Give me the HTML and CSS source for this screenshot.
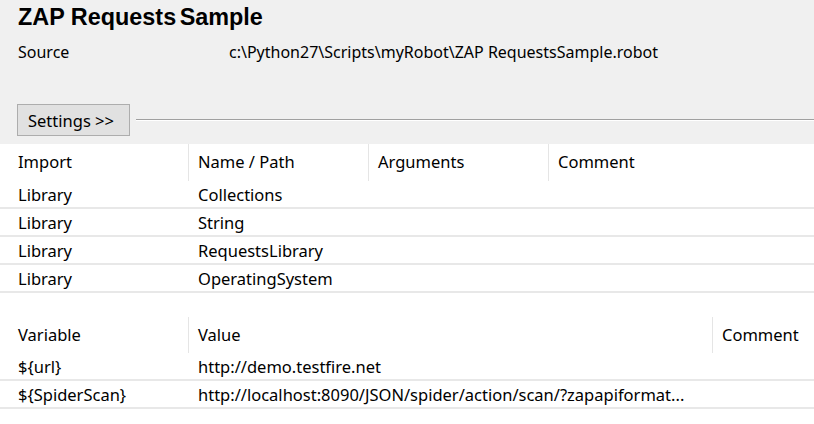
FILE: index.html
```html
<!DOCTYPE html>
<html>
<head>
<meta charset="utf-8">
<link rel="stylesheet" href="styles.css">
</head>
<body>
<div class="top">
  <h1 class="title">ZAP Requests<span class="tight"> Sample</span></h1>
  <div class="source">
    <span class="src-label">Source</span>
    <span class="src-path">c:\Python27\Scripts\myRobot\ZAP RequestsSample.robot</span>
  </div>
  <div class="settings">
    <button class="btn">Settings &gt;&gt;</button>
    <div class="etch"></div>
  </div>
</div>
<div class="tables">
  <div class="grid imports">
    <div class="row head">
      <div class="cell c1">Import</div>
      <div class="cell c2 sep">Name / Path</div>
      <div class="cell c3 sep">Arguments</div>
      <div class="cell c4 sep">Comment</div>
    </div>
    <div class="row"><div class="cell c1">Library</div><div class="cell c2">Collections</div><div class="cell c3"></div><div class="cell c4"></div></div>
    <div class="row"><div class="cell c1">Library</div><div class="cell c2">String</div><div class="cell c3"></div><div class="cell c4"></div></div>
    <div class="row"><div class="cell c1">Library</div><div class="cell c2">RequestsLibrary</div><div class="cell c3"></div><div class="cell c4"></div></div>
    <div class="row"><div class="cell c1">Library</div><div class="cell c2">OperatingSystem</div><div class="cell c3"></div><div class="cell c4"></div></div>
  </div>
  <div class="grid vars">
    <div class="row head">
      <div class="cell v1">Variable</div>
      <div class="cell v2 sep">Value</div>
      <div class="cell v3 sep">Comment</div>
    </div>
    <div class="row"><div class="cell v1">${url}</div><div class="cell v2">http://demo.testfire.net</div><div class="cell v3"></div></div>
    <div class="row"><div class="cell v1">${SpiderScan}</div><div class="cell v2">http://localhost:8090/JSON/spider/action/scan/?zapapiformat...</div><div class="cell v3"></div></div>
  </div>
</div>
</body>
</html>
```
FILE: styles.css
```css
html, body {
  margin: 0;
  padding: 0;
}
body {
  width: 814px;
  height: 424px;
  overflow: hidden;
  background: #ffffff;
  font-family: "Noto Sans", "Open Sans", sans-serif;
  font-size: 16.5px;
  color: #000;
}
.top {
  background: #f0f0f0;
  height: 144px;
  box-sizing: border-box;
  padding-top: 3px;
}
.title {
  margin: 0 0 0 18px;
  font-family: "Liberation Sans", Arial, sans-serif;
  font-weight: bold;
  font-size: 23.4px;
  line-height: 28px;
}
.tight {
  word-spacing: -3px;
}
.source {
  display: flex;
  margin-top: 10px;
  line-height: 22px;
  font-size: 16px;
}
.src-label {
  width: 211px;
  padding-left: 18px;
}
.settings {
  display: flex;
  align-items: center;
  margin-top: 41px;
  padding-left: 17px;
}
.btn {
  width: 113px;
  height: 32px;
  background: #e1e1e1;
  border: 1px solid #adadad;
  font-family: inherit;
  font-size: 16.5px;
  color: #000;
  text-align: left;
  padding: 0 0 0 10px;
  margin: 0;
}
.etch {
  flex: 1;
  margin-left: 6px;
  height: 1px;
  border-top: 1px solid #a0a0a0;
  background: #ffffff;
}
.row {
  display: flex;
  height: 28px;
  border-bottom: 2px solid #e8e8e8;
  box-sizing: border-box;
  align-items: center;
}
.row.head {
  height: 37px;
  border-bottom: none;
  align-items: stretch;
}
.cell {
  box-sizing: border-box;
  padding-left: 10px;
  white-space: nowrap;
  display: flex;
  align-items: center;
}
.c1, .v1 { width: 188px; padding-left: 18px; }
.c2 { width: 180px; }
.c3 { width: 180px; }
.c4 { flex: 1; }
.v2 { width: 524px; }
.v3 { flex: 1; }
.head .cell.sep {
  border-left: 1px solid #e5e5e5;
  padding-left: 9px;
}
.head .cell {
  padding-bottom: 2px;
}
.vars {
  margin-top: 24px;
}
.vars .row.head {
  height: 36px;
}
```
